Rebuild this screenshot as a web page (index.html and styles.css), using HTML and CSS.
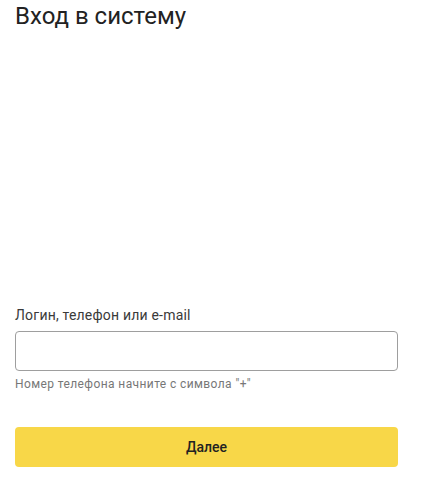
FILE: index.html
```html
<!DOCTYPE html>
<html>
<head>
    <title>Вход в систему</title>
    <link rel="stylesheet" href="styles.css">
</head>
<body>
    <div class="login-page">
        <h1 class="login-title">Вход в систему</h1>

        <form class="login-form">
            <label class="field-label" for="login">Логин, телефон или e-mail</label>
            <input class="field-input" id="login" type="text">
            <div class="field-hint">Номер телефона начните с символа "+"</div>

            <button class="submit-btn" type="button">Далее</button>
        </form>
    </div>
</body>
</html>
```

FILE: styles.css
```css
* {
    margin: 0;
    padding: 0;
    box-sizing: border-box;
}

body {
    font-family: Roboto, 'Liberation Sans', Arial, sans-serif;
    background-color: #FFFFFF;
    color: #222222;
    padding: 0 15px;
}

.login-page {
    width: 383px;
    display: flex;
    flex-direction: column;
}

.login-title {
    font-size: 24px;
    font-weight: 400;
    line-height: 32px;
    color: #222222;
}

.login-form {
    margin-top: 273px;
    display: flex;
    flex-direction: column;
}

.field-label {
    font-size: 14px;
    line-height: 20px;
    letter-spacing: 0.2px;
    color: #3A3A3A;
    margin-bottom: 6px;
}

.field-input {
    height: 40px;
    border: 1px solid #9E9E9E;
    border-radius: 4px;
    padding: 0 12px;
    font-family: inherit;
    font-size: 14px;
    outline: none;
}

.field-hint {
    margin-top: 5px;
    font-size: 12px;
    line-height: 16px;
    letter-spacing: 0.4px;
    color: #777777;
}

.submit-btn {
    margin-top: 35px;
    height: 40px;
    border: none;
    border-radius: 4px;
    background-color: #F8D748;
    color: #222222;
    font-family: inherit;
    font-size: 14px;
    font-weight: 500;
    cursor: pointer;
}
```
